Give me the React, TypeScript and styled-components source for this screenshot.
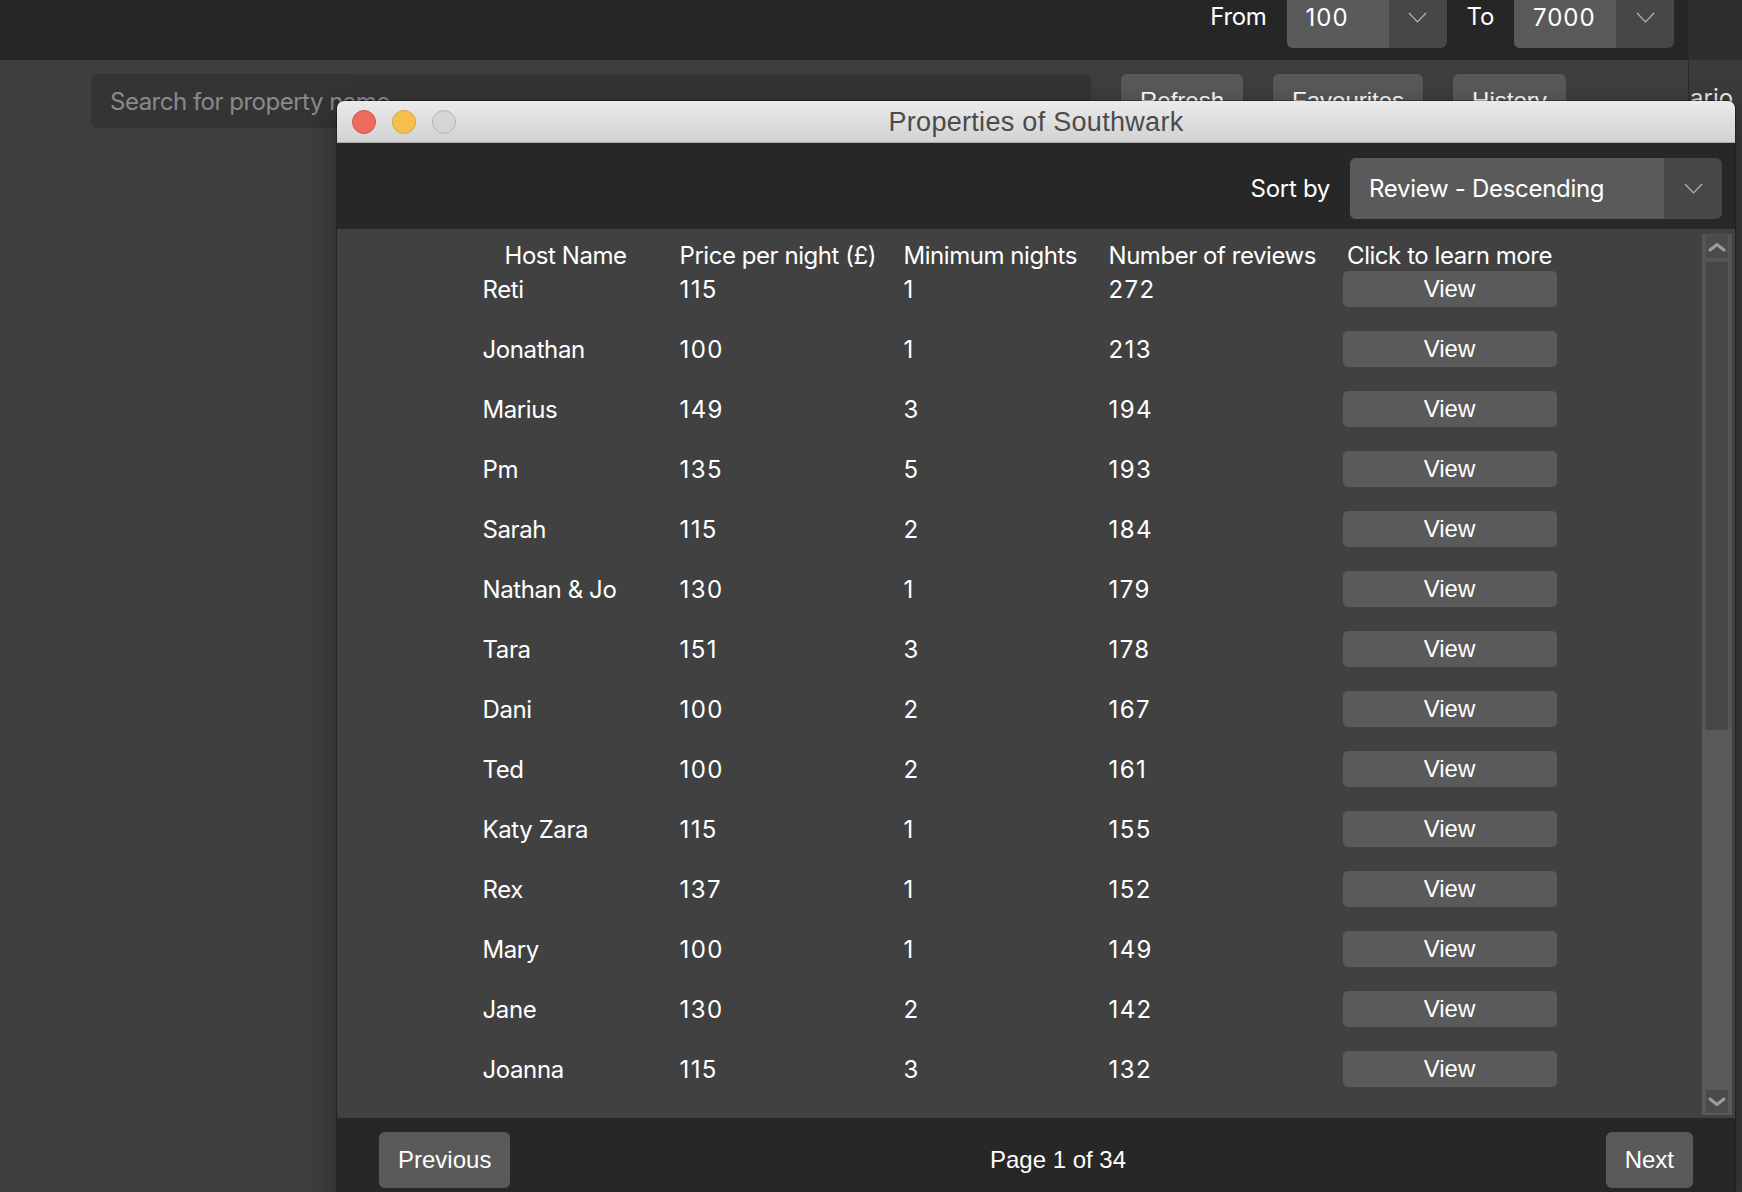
import React from "react";
import styled, { createGlobalStyle } from "styled-components";

const GlobalStyle = createGlobalStyle`
  html, body { margin: 0; padding: 0; background: #3e3e3e; overflow: hidden; }
  body { font-family: Inter, "Noto Sans", sans-serif; }
  * { box-sizing: border-box; }
`;

const Page = styled.div`
  position: relative;
  width: 1742px;
  height: 1192px;
  overflow: hidden;
  display: flex;
  background: #3e3e3e;
`;

const MainPane = styled.div`
  width: 1688px;
  display: flex;
  flex-direction: column;
`;

const Divider = styled.div`
  width: 1px;
  background: #2a2a2a;
`;

const SidePane = styled.div`
  flex: 1;
  display: flex;
  flex-direction: column;
  background: #3b3b3b;
  overflow: hidden;
`;

const SideTop = styled.div`
  height: 60px;
  background: #2e2e2e;
`;

const SideText = styled.div`
  padding: 23px 0 0 1px;
  color: #e6e6e6;
  font: 400 24px Inter, sans-serif;
  white-space: nowrap;
`;

const TopBar = styled.div`
  height: 60px;
  background: #262626;
  display: flex;
  justify-content: flex-end;
  align-items: flex-start;
  gap: 20px;
  padding-right: 14px;
`;

const BarLabel = styled.span`
  color: #fff;
  font: 400 24px Inter, sans-serif;
  letter-spacing: -0.3px;
  line-height: 34px;
`;

const SelectBox = styled.div<{ $w: number; $raised?: boolean }>`
  display: flex;
  width: ${(p) => p.$w}px;
  height: 61px;
  border-radius: 6px;
  overflow: hidden;
  background: #474747;
  flex-shrink: 0;
  margin-top: ${(p) => (p.$raised ? -13 : 0)}px;
`;

const SelectValue = styled.div<{ $num?: boolean }>`
  flex: 1;
  background: #5a5a5a;
  color: #fff;
  font: 400 24px Inter, sans-serif;
  letter-spacing: ${(p) => (p.$num ? "1px" : "-0.3px")};
  display: flex;
  align-items: center;
  padding-left: 19px;
  white-space: nowrap;
`;

const SelectArrow = styled.div`
  width: 58px;
  display: flex;
  align-items: center;
  justify-content: center;
`;

const SearchRow = styled.div`
  display: flex;
  gap: 30px;
  padding: 14px 0 0 91px;
`;

const SearchInput = styled.div`
  width: 1000px;
  height: 54px;
  background: #343434;
  border-radius: 6px;
  color: #8a8a8a;
  font: 400 24px Inter, sans-serif;
  letter-spacing: -0.5px;
  display: flex;
  align-items: center;
  padding-left: 19px;
`;

const BgButton = styled.div`
  height: 54px;
  padding: 0 19px;
  background: #595959;
  border-radius: 6px;
  color: #fff;
  font: 400 24px "Liberation Sans", Arial, sans-serif;
  display: flex;
  align-items: center;
`;

const Window = styled.div`
  position: absolute;
  left: 337px;
  top: 101px;
  width: 1398px;
  height: 1101px;
  display: flex;
  flex-direction: column;
  border-radius: 7px 7px 0 0;
  overflow: hidden;
  background: #272727;
  box-shadow: 0 0 0 1px rgba(0, 0, 0, 0.3), 0 8px 30px rgba(0, 0, 0, 0.35);
`;

const TitleBar = styled.div`
  height: 42px;
  flex-shrink: 0;
  background: linear-gradient(#ebebeb, #d2d2d2);
  border-bottom: 1px solid #ababab;
  display: grid;
  grid-template-columns: 1fr auto 1fr;
  align-items: center;
  padding: 0 15px;
`;

const Lights = styled.div`
  display: flex;
  gap: 16px;
`;

const Light = styled.span<{ $fill: string; $edge: string }>`
  width: 24px;
  height: 24px;
  border-radius: 50%;
  background: ${(p) => p.$fill};
  border: 1px solid ${(p) => p.$edge};
`;

const Title = styled.div`
  color: #4b4b4b;
  font: 400 27px "Liberation Sans", Arial, sans-serif;
  letter-spacing: 0.3px;
  margin-top: 1px;
`;

const SortBar = styled.div`
  height: 86px;
  flex-shrink: 0;
  display: flex;
  justify-content: flex-end;
  align-items: flex-start;
  padding: 15px 13px 0 0;
  gap: 20px;
`;

const SortLabel = styled.span`
  color: #fff;
  font: 400 24px Inter, sans-serif;
  letter-spacing: -0.3px;
  line-height: 61px;
`;

const TableArea = styled.div`
  flex: 1;
  background: #414141;
  display: flex;
`;

const Viewport = styled.div`
  flex: 1;
  display: flex;
  justify-content: center;
  padding-top: 11px;
`;

const Table = styled.div`
  width: 1074px;
  display: flex;
  flex-direction: column;
`;

const columns = "197px 224px 205px 234px 214px";

const HeaderRow = styled.div`
  display: grid;
  grid-template-columns: ${columns};
  height: 30px;
  align-items: center;
  margin-bottom: 1px;
`;

const HeadCell = styled.div<{ $indent?: number; $center?: boolean }>`
  color: #fff;
  font: 400 24px Inter, sans-serif;
  letter-spacing: -0.45px;
  white-space: nowrap;
  padding-left: ${(p) => p.$indent ?? 0}px;
  text-align: ${(p) => (p.$center ? "center" : "left")};
`;

const Body = styled.div`
  display: flex;
  flex-direction: column;
  gap: 24px;
`;

const DataRow = styled.div`
  display: grid;
  grid-template-columns: ${columns};
  height: 36px;
  align-items: center;
`;

const Cell = styled.div<{ $num?: boolean }>`
  color: #fff;
  font: 400 24px Inter, sans-serif;
  letter-spacing: ${(p) => (p.$num ? "1.4px" : "-0.4px")};
  white-space: nowrap;
`;

const ViewButton = styled.div`
  height: 36px;
  background: #5a5a5a;
  border-radius: 5px;
  color: #fff;
  font: 400 24px "Liberation Sans", Arial, sans-serif;
  display: flex;
  align-items: center;
  justify-content: center;
`;

const ScrollTrack = styled.div`
  width: 30px;
  margin: 5px 3px 3px 0;
  display: flex;
  flex-direction: column;
  background: #555555;
`;

const ScrollArrow = styled.div<{ $bottom?: boolean }>`
  height: 23px;
  margin: ${(p) => (p.$bottom ? "0 4px 2px" : "1px 4px 0")};
  background: #4b4b4b;
  display: flex;
  align-items: center;
  justify-content: center;
`;

const Thumb = styled.div`
  height: 468px;
  margin: 4px 4px 0;
  background: #474747;
`;

const TrackRest = styled.div`
  flex: 1;
  background: #5a5a5a;
`;

const BottomTrack = styled.div`
  background: #5a5a5a;
  padding-top: 3px;
`;

const Footer = styled.div`
  height: 84px;
  flex-shrink: 0;
  display: flex;
  align-items: flex-start;
  padding: 14px 42px 0;
  background: #272727;
`;

const PageButton = styled.div`
  height: 56px;
  padding: 0 19px;
  background: #5a5a5a;
  border-radius: 6px;
  color: #fff;
  font: 400 24px "Liberation Sans", Arial, sans-serif;
  display: flex;
  align-items: center;
`;

const PageText = styled.div`
  flex: 1;
  text-align: center;
  color: #fff;
  font: 400 24px "Liberation Sans", Arial, sans-serif;
  line-height: 56px;
`;

const Chevron = () => (
  <svg width="19" height="11" viewBox="0 0 19 11">
    <polyline points="1,1 9.5,10 18,1" fill="none" stroke="#b4b4b4" strokeWidth="1.2" />
  </svg>
);

const ScrollChevron = ({ up }: { up?: boolean }) => (
  <svg width="18" height="10" viewBox="0 0 18 10">
    <polyline
      points={up ? "2,8 9,2.5 16,8" : "2,2 9,7.5 16,2"}
      fill="none"
      stroke="#9c9c9c"
      strokeWidth="3"
      strokeLinecap="round"
      strokeLinejoin="round"
    />
  </svg>
);

type Row = { host: string; price: number; min: number; reviews: number };

const rows: Row[] = [
  { host: "Reti", price: 115, min: 1, reviews: 272 },
  { host: "Jonathan", price: 100, min: 1, reviews: 213 },
  { host: "Marius", price: 149, min: 3, reviews: 194 },
  { host: "Pm", price: 135, min: 5, reviews: 193 },
  { host: "Sarah", price: 115, min: 2, reviews: 184 },
  { host: "Nathan & Jo", price: 130, min: 1, reviews: 179 },
  { host: "Tara", price: 151, min: 3, reviews: 178 },
  { host: "Dani", price: 100, min: 2, reviews: 167 },
  { host: "Ted", price: 100, min: 2, reviews: 161 },
  { host: "Katy Zara", price: 115, min: 1, reviews: 155 },
  { host: "Rex", price: 137, min: 1, reviews: 152 },
  { host: "Mary", price: 100, min: 1, reviews: 149 },
  { host: "Jane", price: 130, min: 2, reviews: 142 },
  { host: "Joanna", price: 115, min: 3, reviews: 132 },
];

export default function App() {
  return (
    <>
      <GlobalStyle />
      <Page>
        <MainPane>
          <TopBar>
            <BarLabel>From</BarLabel>
            <SelectBox $w={160} $raised>
              <SelectValue $num>100</SelectValue>
              <SelectArrow>
                <Chevron />
              </SelectArrow>
            </SelectBox>
            <BarLabel>To</BarLabel>
            <SelectBox $w={160} $raised>
              <SelectValue $num>7000</SelectValue>
              <SelectArrow>
                <Chevron />
              </SelectArrow>
            </SelectBox>
          </TopBar>
          <SearchRow>
            <SearchInput>Search for property name</SearchInput>
            <BgButton>Refresh</BgButton>
            <BgButton>Favourites</BgButton>
            <BgButton>History</BgButton>
          </SearchRow>
        </MainPane>
        <Divider />
        <SidePane>
          <SideTop />
          <SideText>ario</SideText>
        </SidePane>

        <Window>
          <TitleBar>
            <Lights>
              <Light $fill="#ed6a5e" $edge="#d25448" />
              <Light $fill="#f6c04f" $edge="#d9a33a" />
              <Light $fill="#d5d5d5" $edge="#b6b6b6" />
            </Lights>
            <Title>Properties of Southwark</Title>
            <span />
          </TitleBar>
          <SortBar>
            <SortLabel>Sort by</SortLabel>
            <SelectBox $w={372}>
              <SelectValue>Review - Descending</SelectValue>
              <SelectArrow>
                <Chevron />
              </SelectArrow>
            </SelectBox>
          </SortBar>
          <TableArea>
            <Viewport>
              <Table>
                <HeaderRow>
                  <HeadCell $indent={22}>Host Name</HeadCell>
                  <HeadCell>Price per night (£)</HeadCell>
                  <HeadCell>Minimum nights</HeadCell>
                  <HeadCell>Number of reviews</HeadCell>
                  <HeadCell $center>Click to learn more</HeadCell>
                </HeaderRow>
                <Body>
                  {rows.map((r) => (
                    <DataRow key={r.host}>
                      <Cell>{r.host}</Cell>
                      <Cell $num>{r.price}</Cell>
                      <Cell $num>{r.min}</Cell>
                      <Cell $num>{r.reviews}</Cell>
                      <ViewButton>View</ViewButton>
                    </DataRow>
                  ))}
                </Body>
              </Table>
            </Viewport>
            <ScrollTrack>
              <ScrollArrow>
                <ScrollChevron up />
              </ScrollArrow>
              <Thumb />
              <TrackRest />
              <BottomTrack>
                <ScrollArrow $bottom>
                  <ScrollChevron />
                </ScrollArrow>
              </BottomTrack>
            </ScrollTrack>
          </TableArea>
          <Footer>
            <PageButton>Previous</PageButton>
            <PageText>Page 1 of 34</PageText>
            <PageButton>Next</PageButton>
          </Footer>
        </Window>
      </Page>
    </>
  );
}
